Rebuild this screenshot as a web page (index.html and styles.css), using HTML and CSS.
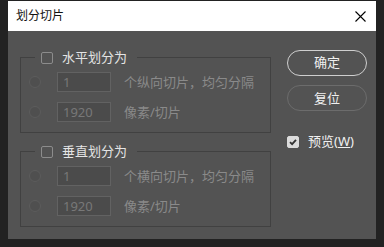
FILE: index.html
```html
<!DOCTYPE html>
<html>
<head>
    <meta charset="UTF-8">
    <title>划分切片</title>
    <link rel="stylesheet" href="styles.css">
</head>
<body>
<div class="dialog">
    <div class="title-bar">
        <span class="title">划分切片</span>
        <span class="close">
            <svg width="11" height="11" viewBox="0 0 11 11"><path d="M0.5 0.5L10.5 10.5M10.5 0.5L0.5 10.5" stroke="#000" stroke-width="1.1" fill="none"/></svg>
        </span>
    </div>
    <div class="body">
        <div class="groups">
            <fieldset class="group">
                <legend><em class="check"></em><span>水平划分为</span></legend>
                <div class="row">
                    <i class="radio"></i>
                    <span class="input">1</span>
                    <span class="label">个纵向切片，均匀分隔</span>
                </div>
                <div class="row">
                    <i class="radio"></i>
                    <span class="input">1920</span>
                    <span class="label">像素/切片</span>
                </div>
            </fieldset>
            <fieldset class="group">
                <legend><em class="check"></em><span>垂直划分为</span></legend>
                <div class="row">
                    <i class="radio"></i>
                    <span class="input">1</span>
                    <span class="label">个横向切片，均匀分隔</span>
                </div>
                <div class="row">
                    <i class="radio"></i>
                    <span class="input">1920</span>
                    <span class="label">像素/切片</span>
                </div>
            </fieldset>
        </div>
        <div class="side">
            <div class="btn primary">确定</div>
            <div class="btn">复位</div>
            <div class="preview">
                <em class="check on">
                    <svg width="12" height="12" viewBox="0 0 12 12"><path d="M3 6.2L5.1 8.2L9 3.8" stroke="#333" stroke-width="1.8" fill="none"/></svg>
                </em>
                <span>预览(<u>W</u>)</span>
            </div>
        </div>
    </div>
</div>
</body>
</html>
```

FILE: styles.css
```css
* {
    margin: 0;
    padding: 0;
    box-sizing: border-box;
    font-family: "Noto Sans", "Noto Sans CJK SC", sans-serif;
}

html, body {
    background: #222;
}

.dialog {
    margin: 1px 8px 0;
    width: 368px;
    height: 238px;
    background: #535353;
}

.title-bar {
    display: flex;
    align-items: center;
    justify-content: space-between;
    height: 30px;
    padding: 0 10px 0 8px;
    background: #fff;
}

.title {
    font-size: 12px;
    line-height: 14px;
    color: #111;
}

.close {
    display: flex;
}

.body {
    display: flex;
    padding: 19px 9px 0 12px;
}

.groups {
    width: 251px;
}

.group {
    margin-bottom: 11px;
    padding: 0 0 10px 8px;
    border: 1px solid #414141;
}

.group legend {
    display: flex;
    align-items: center;
    height: 15px;
    margin-left: 6px;
    padding: 0 10px 0 6px;
}

.group legend span {
    margin-left: 9px;
    font-size: 13px;
    line-height: 15px;
    color: #e4e4e4;
}

.check {
    display: block;
    width: 12px;
    height: 12px;
    border: 1px solid #8c8c8c;
    border-radius: 2px;
}

.check.on {
    border-color: #dcdcdc;
    background: #dcdcdc;
}

.check svg {
    display: block;
    margin: -1px;
}

.row {
    display: flex;
    align-items: center;
    height: 20px;
    margin-top: 7px;
}

.row + .row {
    margin-top: 10px;
}

.radio {
    width: 12px;
    height: 12px;
    border: 1px solid #5c5c5c;
    border-radius: 50%;
    background: #4f4f4f;
}

.input {
    width: 54px;
    height: 20px;
    margin-left: 16px;
    padding-left: 5px;
    border: 1px solid #626262;
    background: #4b4b4b;
    font-size: 13px;
    line-height: 18px;
    color: #787878;
}

.label {
    margin-left: 13px;
    font-size: 13px;
    line-height: 16px;
    color: #8a8a8a;
}

.side {
    margin-left: 16px;
    width: 80px;
}

.btn {
    height: 26px;
    margin-bottom: 9px;
    border: 1px solid #6c6c6c;
    border-radius: 13px;
    text-align: center;
    font-size: 13px;
    line-height: 24px;
    color: #f0f0f0;
}

.btn.primary {
    border: 1.5px solid #cfcfcf;
    line-height: 23px;
}

.preview {
    display: flex;
    align-items: center;
    margin-top: 23px;
}

.preview span {
    margin-left: 9px;
    font-size: 13px;
    line-height: 15px;
    color: #f0f0f0;
}
```
